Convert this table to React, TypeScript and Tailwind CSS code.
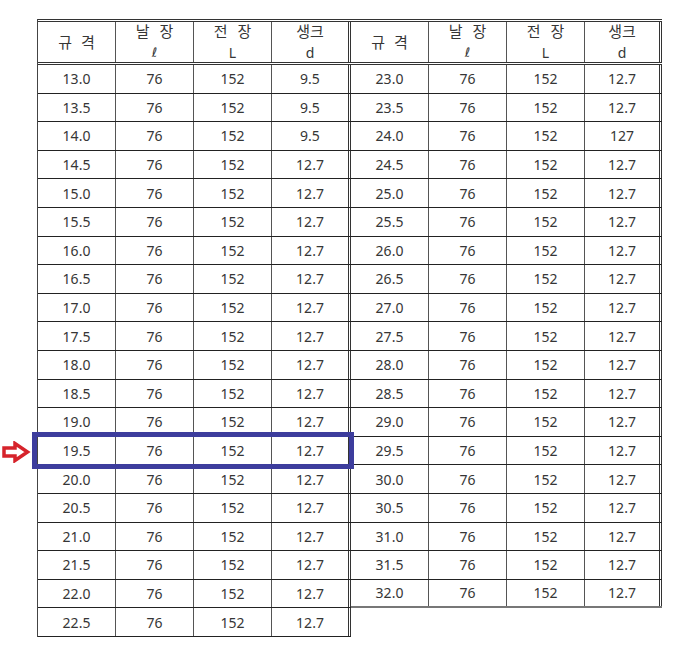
const leftRows = [
  ["13.0", "76", "152", "9.5"],
  ["13.5", "76", "152", "9.5"],
  ["14.0", "76", "152", "9.5"],
  ["14.5", "76", "152", "12.7"],
  ["15.0", "76", "152", "12.7"],
  ["15.5", "76", "152", "12.7"],
  ["16.0", "76", "152", "12.7"],
  ["16.5", "76", "152", "12.7"],
  ["17.0", "76", "152", "12.7"],
  ["17.5", "76", "152", "12.7"],
  ["18.0", "76", "152", "12.7"],
  ["18.5", "76", "152", "12.7"],
  ["19.0", "76", "152", "12.7"],
  ["19.5", "76", "152", "12.7"],
  ["20.0", "76", "152", "12.7"],
  ["20.5", "76", "152", "12.7"],
  ["21.0", "76", "152", "12.7"],
  ["21.5", "76", "152", "12.7"],
  ["22.0", "76", "152", "12.7"],
  ["22.5", "76", "152", "12.7"],
];

const rightRows = [
  ["23.0", "76", "152", "12.7"],
  ["23.5", "76", "152", "12.7"],
  ["24.0", "76", "152", "127"],
  ["24.5", "76", "152", "12.7"],
  ["25.0", "76", "152", "12.7"],
  ["25.5", "76", "152", "12.7"],
  ["26.0", "76", "152", "12.7"],
  ["26.5", "76", "152", "12.7"],
  ["27.0", "76", "152", "12.7"],
  ["27.5", "76", "152", "12.7"],
  ["28.0", "76", "152", "12.7"],
  ["28.5", "76", "152", "12.7"],
  ["29.0", "76", "152", "12.7"],
  ["29.5", "76", "152", "12.7"],
  ["30.0", "76", "152", "12.7"],
  ["30.5", "76", "152", "12.7"],
  ["31.0", "76", "152", "12.7"],
  ["31.5", "76", "152", "12.7"],
  ["32.0", "76", "152", "12.7"],
];

// column widths incl. right border; last one has the double rule
const leftCols = ["w-[78px] border-r border-[#555]", "w-[78px] border-r border-[#555]", "w-[78px] border-r border-[#555]", "w-[79px] border-r-[3px] border-double border-[#333]"];
const rightCols = ["w-[78px] border-r border-[#555]", "w-[78px] border-r border-[#555]", "w-[78px] border-r border-[#555]", "w-[77px] border-r-[3px] border-double border-[#333]"];

function Header({ cols }: { cols: string[] }) {
  return (
    <div className="flex h-[46px] border-y-[3px] border-double border-[#333] text-[15px]">
      <div className={`${cols[0]} flex items-center justify-center gap-[9px]`}>
        <span>규</span>
        <span>격</span>
      </div>
      <div className={`${cols[1]} flex flex-col items-center justify-center leading-[21px]`}>
        <div className="flex gap-[10px]">
          <span>날</span>
          <span>장</span>
        </div>
        <span className="font-['DejaVu_Sans',sans-serif] text-[13px]">ℓ</span>
      </div>
      <div className={`${cols[2]} flex flex-col items-center justify-center leading-[21px]`}>
        <div className="flex gap-[10px]">
          <span>전</span>
          <span>장</span>
        </div>
        <span className="text-[14px]">L</span>
      </div>
      <div className={`${cols[3]} flex flex-col items-center justify-center leading-[21px]`}>
        <span>생크</span>
        <span className="text-[14px]">d</span>
      </div>
    </div>
  );
}

function Arrow() {
  return (
    <svg width="30" height="22" viewBox="0 0 30 22">
      <polygon
        points="3,7 14,7 14,2.5 26.5,11 14,19.5 14,15 3,15"
        fill="#fff"
        stroke="#d6232b"
        strokeWidth="3.5"
        strokeLinejoin="miter"
      />
    </svg>
  );
}

function Block({ rows, cols, outer, lastRow }: { rows: string[][]; cols: string[]; outer: string; lastRow: string }) {
  return (
    <div className={`flex flex-col ${outer}`}>
      <Header cols={cols} />
      {rows.map((r, i) => {
        const last = i === rows.length - 1;
        const marked = r[0] === "19.5";
        return (
          <div key={r[0]} className={`relative flex h-[28.6px] ${last ? lastRow : "border-b border-[#222]"}`}>
            {r.map((v, j) => (
              <div key={j} className={`${cols[j]} flex items-center justify-center`}>
                {v}
              </div>
            ))}
            {marked && (
              <>
                <div className="absolute -left-[6px] -right-[3px] -top-[5px] -bottom-[5px] z-10 border-[5px] border-[#3d3d9d]" />
                <div className="absolute -left-[37px] top-[4px] z-10 flex">
                  <Arrow />
                </div>
              </>
            )}
          </div>
        );
      })}
    </div>
  );
}

export default function App() {
  return (
    <div className="min-h-[651px] w-[700px] bg-white pl-[37px] pt-[19px] font-['Noto_Sans','Noto_Sans_CJK_KR',sans-serif] text-[14px] text-[#363636]">
      <div className="flex items-start">
        <Block rows={leftRows} cols={leftCols} outer="border-l border-[#444]" lastRow="border-b border-[#222]" />
        <Block rows={rightRows} cols={rightCols} outer="" lastRow="border-b-2 border-[#777]" />
      </div>
    </div>
  );
}
